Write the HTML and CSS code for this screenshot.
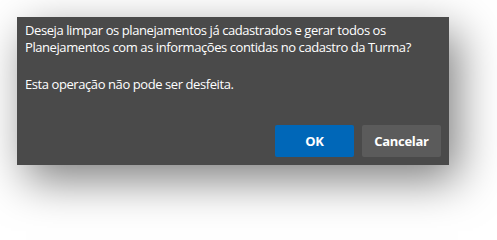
FILE: index.html
```html
<!DOCTYPE html>
<html lang="pt">
<head>
<meta charset="utf-8">
<title>Confirmação</title>
<link rel="stylesheet" href="styles.css">
</head>
<body>
<div class="dialog">
  <div class="message">
    <p>Deseja limpar os planejamentos já cadastrados e gerar todos os<br>Planejamentos com as informações contidas no cadastro da Turma?</p>
    <p>Esta operação não pode ser desfeita.</p>
  </div>
  <div class="actions">
    <button class="btn btn-primary">OK</button>
    <button class="btn btn-secondary">Cancelar</button>
  </div>
</div>
</body>
</html>
```

FILE: styles.css
```css
html, body {
  margin: 0;
  padding: 0;
  background: #ffffff;
}
html {
  height: 100%;
}
body {
  box-sizing: border-box;
  min-height: 100vh;
  padding: 17px;
  overflow: hidden;
  font-family: "Open Sans", "Noto Sans", "Liberation Sans", sans-serif;
}
.dialog {
  box-sizing: border-box;
  width: 432px;
  background: #4a4a4a;
  color: #ffffff;
  padding: 5px 8px 8px 8px;
  box-shadow: 9px 15px 42px rgba(0, 0, 0, 0.5);
  display: flex;
  flex-direction: column;
}
.message p {
  margin: 0;
  font-size: 13px;
  line-height: 17px;
  letter-spacing: -0.42px;
}
.message p + p {
  margin-top: 20px;
}
.actions {
  margin-top: 32px;
  display: flex;
  justify-content: flex-end;
  gap: 8px;
}
.btn {
  width: 79px;
  height: 32px;
  border: none;
  border-radius: 2px;
  color: #ffffff;
  font-family: "Open Sans", "Noto Sans", "Liberation Sans", sans-serif;
  font-size: 13px;
  font-weight: 700;
  letter-spacing: -0.3px;
  padding: 0;
}
.btn-primary {
  background: #0067b8;
}
.btn-secondary {
  background: #5b5b5b;
}
```
